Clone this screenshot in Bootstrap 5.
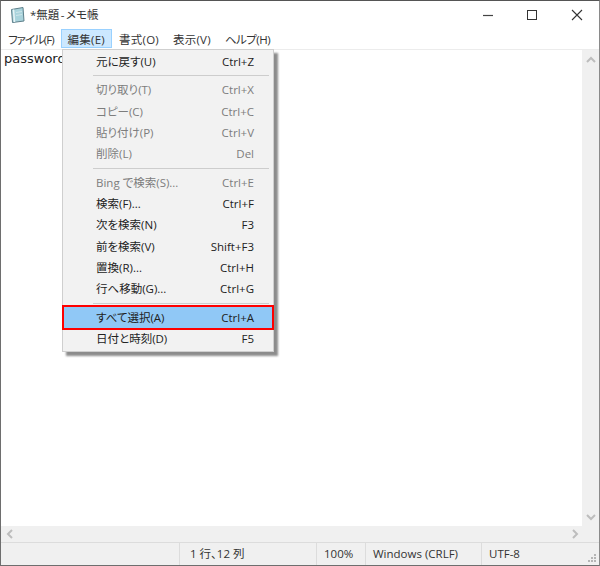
<!DOCTYPE html>
<html lang="ja">
<head>
<meta charset="UTF-8">
<title>*無題 - メモ帳</title>
<link href="https://cdn.jsdelivr.net/npm/bootstrap@5.3.0/dist/css/bootstrap.min.css" rel="stylesheet">
<style>
html, body { width: 600px; height: 566px; overflow: hidden; background: #fff; }
body { font-family: "Open Sans", "Noto Sans CJK JP", sans-serif; font-size: 11.5px; color: #222; font-feature-settings: "palt"; }
.note-window { position: relative; width: 600px; height: 566px; border: 1px solid #6e6e6e; border-top-color: #555; border-right-color: #8a8a8a; }
.title-bar { height: 27px; padding-left: 8px; }
.title-text { margin-left: 3px; font-size: 11.5px; word-spacing: -1.5px; color: #333; }
.win-btn { width: 44.5px; height: 27px; }
.menu-bar { height: 21px; padding-left: 0; }
.menu-entry { height: 19px; line-height: 19px; padding: 0 6px; margin-top: 1px; color: #333; border: 1px solid transparent; white-space: nowrap; letter-spacing: .25px; }
.menu-entry.tight-kana { letter-spacing: -1px; }
.menu-entry.tight-help { letter-spacing: -.5px; }
.menu-entry.is-open { background: #cce8ff; border-color: #99d1ff; }
.edit-row { min-height: 0; border-top: 1px solid #ececec; }
.edit-area { font-family: "DejaVu Sans", sans-serif; font-size: 13px; line-height: 18px; padding: 0 3px; color: #222; }
.scroll-v { width: 17px; background: #f0f0f0; padding: 6px 0 5px; }
.scroll-h { height: 16px; background: #f0f0f0; padding: 0 20px 0 5px; }
.status-bar { height: 23px; background: #f0f0f0; border-top: 1px solid #dcdcdc; color: #333; }
.status-cell { height: 100%; line-height: 21px; border-left: 1px solid #dcdcdc; padding-left: 7px; white-space: nowrap; }
.status-cell.first-cell { padding-left: 10px; }
.grip { right: 2px; bottom: 2px; }
.edit-menu.dropdown-menu { position: absolute; display: block; left: 61px; top: 48px; width: 212px; min-width: 0; padding: 1px 2px 2px; margin: 0; font-size: 11.5px; background: #f2f2f2; border: 1px solid #cfcfcf; border-radius: 0; box-shadow: 4px 4px 2px rgba(0,0,0,.45); color: #222; }
.edit-menu .dropdown-item { display: flex; justify-content: space-between; height: 21.33px; line-height: 21px; padding: 0 17px 0 31px; color: #222; white-space: nowrap; }
.edit-menu .dropdown-item.disabled { color: #7d7d7d; background: transparent; }
.edit-menu .dropdown-divider { margin: 3px 2px 3px 28px; border-top: 1px solid #cdcdcd; opacity: 1; }
.edit-menu .dropdown-item.is-picked { background: #90c8f6; outline: 2px solid #f00; margin: 0 -1px; width: calc(100% + 2px); padding-left: 32px; padding-right: 18px; position: relative; }
</style>
</head>
<body>
<div class="note-window d-flex flex-column">
  <div class="title-bar d-flex align-items-center">
    <svg width="18" height="18" viewBox="0 0 18 18">
      <path d="M2.5 3.5 14 1.5 15 15 3.5 16.5Z" fill="#a9d3dc" stroke="#5d7f8a"/>
      <path d="M4.5 3.5 5.5 16" stroke="#e8f4f6" stroke-width="1.5"/>
      <path d="M7 6.5l6-1M7 9.5l6-1" stroke="#cfe6ea"/>
    </svg>
    <span class="title-text flex-grow-1">*無題 - メモ帳</span>
    <div class="win-btn d-flex align-items-center justify-content-center">
      <svg width="12" height="12" viewBox="0 0 12 12"><path d="M1 6.5h10" stroke="#444" stroke-width="1.2"/></svg>
    </div>
    <div class="win-btn d-flex align-items-center justify-content-center">
      <svg width="12" height="12" viewBox="0 0 12 12"><rect x="1.5" y="1.5" width="9" height="9" fill="none" stroke="#333"/></svg>
    </div>
    <div class="win-btn d-flex align-items-center justify-content-center">
      <svg width="12" height="12" viewBox="0 0 12 12"><path d="M1 1l10 10M11 1 1 11" stroke="#333" stroke-width="1.1"/></svg>
    </div>
  </div>
  <div class="menu-bar d-flex">
    <div class="menu-entry tight-kana">ファイル(F)</div>
    <div class="menu-entry is-open">編集(E)</div>
    <div class="menu-entry">書式(O)</div>
    <div class="menu-entry">表示(V)</div>
    <div class="menu-entry tight-help">ヘルプ(H)</div>
  </div>
  <div class="edit-row d-flex flex-grow-1">
    <div class="edit-area flex-grow-1">password</div>
    <div class="scroll-v d-flex flex-column justify-content-between align-items-center">
      <svg width="10" height="8" viewBox="0 0 10 8"><path d="M1 6l4-4 4 4" fill="none" stroke="#bdbdbd" stroke-width="2"/></svg>
      <svg width="10" height="8" viewBox="0 0 10 8"><path d="M1 2l4 4 4-4" fill="none" stroke="#bdbdbd" stroke-width="2"/></svg>
    </div>
  </div>
  <div class="scroll-h d-flex justify-content-between align-items-center">
    <svg width="8" height="10" viewBox="0 0 8 10"><path d="M6 1 2 5l4 4" fill="none" stroke="#bdbdbd" stroke-width="2"/></svg>
    <svg width="8" height="10" viewBox="0 0 8 10"><path d="M2 1l4 4-4 4" fill="none" stroke="#bdbdbd" stroke-width="2"/></svg>
  </div>
  <div class="status-bar d-flex position-relative">
    <div class="flex-grow-1"></div>
    <div class="status-cell first-cell" style="width:137px">1 行、12 列</div>
    <div class="status-cell" style="width:49px">100%</div>
    <div class="status-cell" style="width:116px">Windows (CRLF)</div>
    <div class="status-cell" style="width:118px">UTF-8</div>
    <svg class="grip position-absolute" width="10" height="10" viewBox="0 0 10 10" fill="#b5b5b5">
      <rect x="7" y="1" width="2" height="2"/><rect x="4" y="4" width="2" height="2"/><rect x="7" y="4" width="2" height="2"/>
      <rect x="1" y="7" width="2" height="2"/><rect x="4" y="7" width="2" height="2"/><rect x="7" y="7" width="2" height="2"/>
    </svg>
  </div>
  <div class="edit-menu dropdown-menu">
    <div class="dropdown-item"><span>元に戻す(U)</span><span>Ctrl+Z</span></div>
    <div class="dropdown-divider"></div>
    <div class="dropdown-item disabled"><span>切り取り(T)</span><span>Ctrl+X</span></div>
    <div class="dropdown-item disabled"><span>コピー(C)</span><span>Ctrl+C</span></div>
    <div class="dropdown-item disabled"><span>貼り付け(P)</span><span>Ctrl+V</span></div>
    <div class="dropdown-item disabled"><span>削除(L)</span><span>Del</span></div>
    <div class="dropdown-divider"></div>
    <div class="dropdown-item disabled"><span>Bing で検索(S)...</span><span>Ctrl+E</span></div>
    <div class="dropdown-item"><span>検索(F)...</span><span>Ctrl+F</span></div>
    <div class="dropdown-item"><span>次を検索(N)</span><span>F3</span></div>
    <div class="dropdown-item"><span>前を検索(V)</span><span>Shift+F3</span></div>
    <div class="dropdown-item"><span>置換(R)...</span><span>Ctrl+H</span></div>
    <div class="dropdown-item"><span>行へ移動(G)...</span><span>Ctrl+G</span></div>
    <div class="dropdown-divider"></div>
    <div class="dropdown-item is-picked"><span>すべて選択(A)</span><span>Ctrl+A</span></div>
    <div class="dropdown-item"><span>日付と時刻(D)</span><span>F5</span></div>
  </div>
</div>
<script src="https://cdn.jsdelivr.net/npm/bootstrap@5.3.0/dist/js/bootstrap.bundle.min.js"></script>
</body>
</html>
